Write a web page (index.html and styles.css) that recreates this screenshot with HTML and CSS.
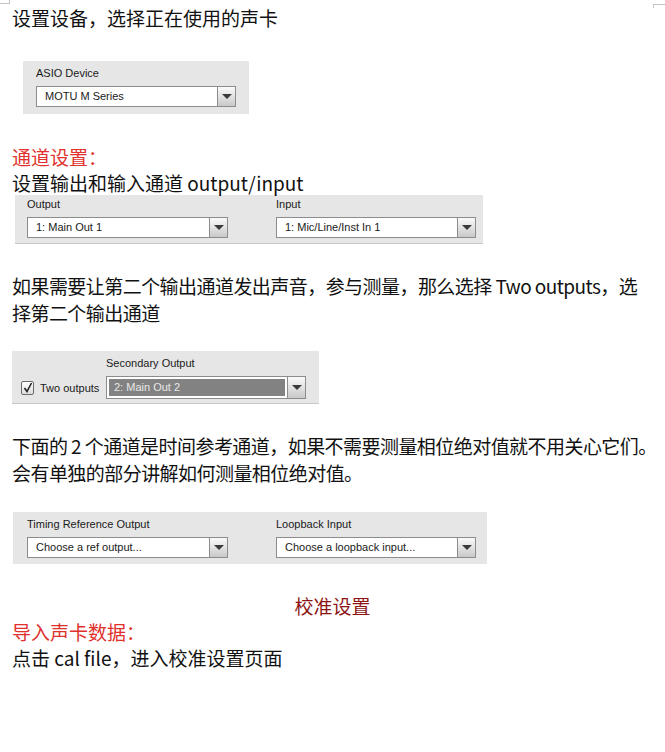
FILE: index.html
```html
<!DOCTYPE html>
<html lang="zh-CN">
<head>
  <meta charset="UTF-8" />
  <meta name="viewport" content="width=device-width, initial-scale=1" />
  <title>设置设备</title>
  <link rel="stylesheet" href="styles.css">
</head>
<body>
  <span class="corner corner-left" aria-hidden="true"></span>
  <span class="corner corner-right" aria-hidden="true"></span>

  <main class="doc">
    <p class="line first">设置设备，选择正在使用的声卡</p>

    <!-- ASIO device -->
    <section class="panel panel-asio">
      <div class="field">
        <span class="label">ASIO Device</span>
        <div class="select">
          <span class="value">MOTU M Series</span>
          <span class="arrow"></span>
        </div>
      </div>
    </section>

    <p class="line red gap-title">通道设置：</p>
    <p class="line">设置输出和输入通道 output/input</p>

    <!-- output / input -->
    <section class="panel panel-io">
      <div class="field">
        <span class="label">Output</span>
        <div class="select">
          <span class="value">1: Main Out 1</span>
          <span class="arrow"></span>
        </div>
      </div>
      <div class="field">
        <span class="label">Input</span>
        <div class="select">
          <span class="value">1: Mic/Line/Inst In 1</span>
          <span class="arrow"></span>
        </div>
      </div>
    </section>

    <p class="para gap-para">如果需要让第二个输出通道发出声音，参与测量，那么选择 Two outputs，选<br>择第二个输出通道</p>

    <!-- secondary output -->
    <section class="panel panel-second">
      <span class="label second-label">Secondary Output</span>
      <div class="second-row">
        <span class="check">
          <svg width="10" height="11" viewBox="0 0 10 11"><path d="M1.5 6 L4 9.5 L8.5 1" fill="none" stroke="#222" stroke-width="1.6"/></svg>
        </span>
        <span class="check-label">Two outputs</span>
        <div class="select select-dim">
          <span class="value">2: Main Out 2</span>
          <span class="arrow"></span>
        </div>
      </div>
    </section>

    <p class="para gap-para">下面的 2 个通道是时间参考通道，如果不需要测量相位绝对值就不用关心它们。<br>会有单独的部分讲解如何测量相位绝对值。</p>

    <!-- timing reference -->
    <section class="panel panel-timing">
      <div class="field">
        <span class="label">Timing Reference Output</span>
        <div class="select">
          <span class="value">Choose a ref output...</span>
          <span class="arrow"></span>
        </div>
      </div>
      <div class="field">
        <span class="label">Loopback Input</span>
        <div class="select">
          <span class="value">Choose a loopback input...</span>
          <span class="arrow"></span>
        </div>
      </div>
    </section>

    <p class="line center dark-red gap-center">校准设置</p>
    <p class="line red">导入声卡数据：</p>
    <p class="line">点击 cal file，进入校准设置页面</p>
  </main>
</body>
</html>
```

FILE: styles.css
```css
/* Base */
*, *::before, *::after {
  box-sizing: border-box;
}
html, body {
  margin: 0;
  padding: 0;
  background: #ffffff;
  color: #111111;
  font-family: "Noto Sans CJK SC", "Noto Sans", sans-serif;
}

/* page corner marks */
.corner {
  position: absolute;
  border-color: #c4c4c4;
  border-style: solid;
}
.corner-left {
  top: 0;
  left: 0;
  width: 10px;
  height: 4px;
  border-width: 0 1px 1px 0;
}
.corner-right {
  top: 4px;
  right: 0;
  width: 12px;
  height: 4px;
  border-width: 1px 0 0 1px;
}

.doc {
  padding: 5px 0 40px 12px;
  width: 665px;
}

/* Text */
.line,
.para {
  margin: 0;
  font-size: 19px;
  line-height: 26px;
}
.para {
  line-height: 27px;
  white-space: nowrap;
  letter-spacing: -0.55px;
}
.red {
  color: #e0312c;
}
.dark-red {
  color: #8e1414;
}
.center {
  text-align: center;
  padding-right: 12px;
}
.gap-title {
  margin-top: 30px;
}
.gap-para {
  margin-top: 28px;
}
.gap-center {
  margin-top: 29px;
}

/* Dialog panels */
.panel {
  background: #e6e6e6;
  font-family: "Liberation Sans", Arial, sans-serif;
  font-size: 11px;
  color: #1a1a1a;
}
.panel-asio {
  width: 226px;
  margin: 30px 0 0 11px;
  padding: 6px 13px 7px;
}
.panel-io {
  width: 468px;
  margin: -1px 0 0 3px;
  padding: 3px 7px 5px 12px;
  display: grid;
  grid-template-columns: 201px 200px;
  column-gap: 48px;
  border-bottom: 1px solid #c8c8c8;
}
.panel-second {
  width: 307px;
  margin-top: 25px;
  padding: 6px 13px 4px 9px;
  border-bottom: 1px solid #c8c8c8;
}
.panel-timing {
  width: 474px;
  margin: 26px 0 0 1px;
  padding: 6px 11px 6px 14px;
  display: grid;
  grid-template-columns: 201px 200px;
  column-gap: 48px;
}

.field {
  display: flex;
  flex-direction: column;
  gap: 6px;
}
.label {
  line-height: 13px;
}

/* Fake dropdown */
.select {
  display: flex;
  height: 21px;
  background: #ffffff;
  border: 1px solid #8c8c8c;
}
.select .value {
  flex: 1;
  padding-left: 8px;
  line-height: 19px;
  white-space: nowrap;
  overflow: hidden;
}
.select .arrow {
  width: 18px;
  border-left: 1px solid #8c8c8c;
  background: linear-gradient(#fafafa, #c9c9c9);
  display: flex;
  align-items: center;
  justify-content: center;
}
.select .arrow::after {
  content: '';
  border-top: 5px solid #3a3a3a;
  border-left: 5px solid transparent;
  border-right: 5px solid transparent;
}

/* Secondary output row */
.second-label {
  display: block;
  margin-left: 85px;
}
.second-row {
  display: flex;
  align-items: center;
  margin-top: 6px;
}
.check {
  width: 13px;
  height: 14px;
  border: 1px solid #6a6a6a;
  border-radius: 2px;
  background: linear-gradient(#ffffff, #dcdcdc);
  display: flex;
  align-items: center;
  justify-content: center;
}
.check-label {
  margin-left: 6px;
  width: 66px;
}
.select-dim {
  width: 200px;
  height: 23px;
}
.select-dim .value {
  margin: 2px;
  padding-left: 5px;
  background: #828282;
  color: #e8e8e8;
  line-height: 17px;
}
```
